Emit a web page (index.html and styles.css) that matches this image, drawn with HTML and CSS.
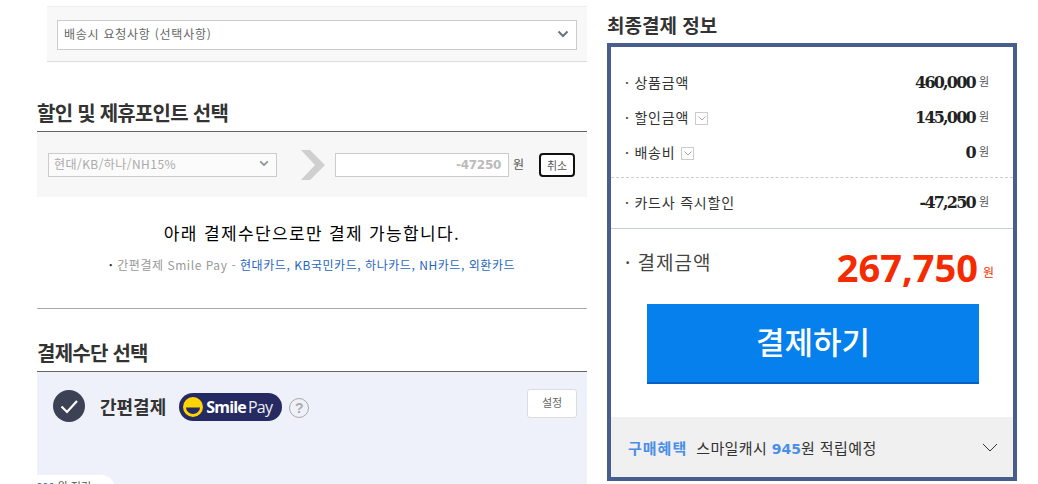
FILE: index.html
```html
<!DOCTYPE html>
<html lang="ko">
<head>
<meta charset="utf-8">
<title>최종결제 정보</title>
<link rel="stylesheet" href="styles.css">
</head>
<body>
<div class="page">
  <main class="left">
    <div class="request">
      <div class="select request-select"><span>배송시 요청사항 (선택사항)</span>
        <svg class="caret" width="12" height="8" viewBox="0 0 12 8"><path d="M1.5 1.5 6 6l4.500-4.500" fill="none" stroke="#6b7280" stroke-width="2"/></svg>
      </div>
    </div>
    <h2 class="section-title discount-title">할인 및 제휴포인트 선택</h2>
    <div class="discount">
      <div class="select discount-select"><span>현대/KB/하나/NH15%</span>
        <svg class="caret" width="10" height="7" viewBox="0 0 12 8"><path d="M1.500 1.500 6 6l4.500-4.500" fill="none" stroke="#8a8f96" stroke-width="2"/></svg>
      </div>
      <svg class="arrow" width="24" height="30" viewBox="0 0 24 30"><path d="M0 0h9l15 15L9 30H0l14-15z" fill="#cfcfcf"/></svg>
      <div class="amount">-47250</div>
      <span class="won-label">원</span>
      <button class="cancel">취소</button>
    </div>
    <p class="notice">아래 결제수단으로만 결제 가능합니다.</p>
    <p class="cards"><b class="dot">·</b> 간편결제 Smile Pay - <span class="blue">현대카드, KB국민카드, 하나카드, NH카드, 외환카드</span></p>
    <hr class="rule">
    <h2 class="section-title method-title">결제수단 선택</h2>
    <div class="method">
      <div class="method-row">
        <svg class="check" width="32" height="32" viewBox="0 0 32 32"><circle cx="16" cy="16" r="16" fill="#3d4155"/><path d="M8.500 16.500l5.500 5.500 10-11" fill="none" stroke="#fff" stroke-width="2.200"/></svg>
        <span class="method-name">간편결제</span>
        <span class="smile">
          <svg width="20" height="20" viewBox="0 0 20 20"><circle cx="10" cy="10" r="10" fill="#ffd400"/><path d="M3 10.500h14a7 6.500 0 0 1-14 0z" fill="#252a63"/></svg>
          <span class="smile-text"><b>Smile</b>Pay</span>
        </span>
        <span class="help">?</span>
        <button class="setting">설정</button>
      </div>
      <div class="pill"><span class="blue">3,000</span> 원 적립</div>
    </div>
  </main>
  <aside class="right">
    <h2 class="summary-title">최종결제 정보</h2>
    <div class="summary">
      <div class="rows">
        <div class="row"><span class="label">· 상품금액</span><span class="value">460,000</span><span class="won">원</span></div>
        <div class="row"><span class="label">· 할인금액<i class="mini"><svg width="8" height="5" viewBox="0 0 8 5"><path d="M.5.500 4 4 7.500.5" fill="none" stroke="#aaa"/></svg></i></span><span class="value">145,000</span><span class="won">원</span></div>
        <div class="row"><span class="label">· 배송비<i class="mini"><svg width="8" height="5" viewBox="0 0 8 5"><path d="M.5.500 4 4 7.500.5" fill="none" stroke="#aaa"/></svg></i></span><span class="value">0</span><span class="won">원</span></div>
      </div>
      <div class="card-row">
        <div class="row"><span class="label">· 카드사 즉시할인</span><span class="value">-47,250</span><span class="won">원</span></div>
      </div>
      <div class="total">
        <span class="total-label">· 결제금액</span>
        <span class="total-value">267,750</span>
        <span class="total-won">원</span>
      </div>
      <button class="pay">결제하기</button>
      <div class="benefit">
        <b class="benefit-head">구매혜택</b>
        <span class="benefit-text">스마일캐시 <em>945</em>원 적립예정</span>
        <svg class="benefit-caret" width="16" height="9" viewBox="0 0 16 9"><path d="M1 1l7 7 7-7" fill="none" stroke="#333"/></svg>
      </div>
    </div>
  </aside>
</div>
</body>
</html>
```
FILE: styles.css
```css
* { box-sizing: border-box; }
html, body { margin: 0; padding: 0; background: #fff; }
body { font-family: "Noto Sans CJK KR", "Noto Sans", sans-serif; color: #333; overflow: hidden; height: 484px; }
.page { display: flex; gap: 20px; padding-left: 37px; height: 484px; overflow: hidden; }
.left { width: 550px; flex: none; }
.right { width: 410px; flex: none; }

.request { margin: 6px 0 0 10px; height: 56px; padding: 13px 10px 0; background: #f8f8f8; border-top: 1px solid #eee; border-bottom: 1px solid #ddd; }
.select { display: flex; align-items: center; justify-content: space-between; background: #fff; border: 1px solid #ccc; }
.request-select { height: 30px; padding: 0 7px 3px 6px; font-size: 12px; letter-spacing: .75px; color: #666; }
.section-title { margin: 0; font-size: 20px; font-weight: 700; color: #333; line-height: 26px; letter-spacing: -.75px; }
.discount-title { margin-top: 38px; height: 31px; }
.discount { display: flex; align-items: center; height: 66px; padding: 0 12px 0 11px; background: #f7f7f7; border-top: 1px solid #666; }
.discount-select { width: 229px; height: 24px; padding: 0 7px 3px 5px; font-size: 12px; letter-spacing: .45px; color: #aaa; background: #fbfbfb; }
.arrow { margin: 0 10px 0 24px; }
.amount { width: 174px; height: 24px; padding-right: 7px; border: 1px solid #ccc; background: #fff; font: 700 12px/22px "DejaVu Sans", sans-serif; color: #bbb; text-align: right; letter-spacing: -.3px; }
.won-label { margin: -3px 0 0 4px; width: 26px; font-size: 12px; color: #555; }
.cancel { width: 36px; height: 24px; padding: 0; border: 2px solid #111; border-radius: 4px; background: #fff; font: 11px "Noto Sans CJK KR", sans-serif; color: #555; }
.notice { margin: 24px 0 0; text-align: center; font-size: 17px; line-height: 24px; color: #000; letter-spacing: 1.35px; }
.cards { margin: 11px 0 0; text-align: center; font-size: 12px; line-height: 18px; color: #999; letter-spacing: .55px; }
.dot { color: #333; }
.blue { color: #1f66c1; }
.rule { margin: 34px 0 0; border: 0; border-top: 1px solid #aaa; }
.method-title { margin-top: 31px; height: 31px; }
.method { position: relative; height: 114px; background: #eef1f9; border-top: 1px solid #666; }
.method-row { display: flex; align-items: center; padding: 18px 10px 0 16px; }
.method-name { margin-left: 15px; font-size: 18px; font-weight: 700; color: #333; letter-spacing: 0; }
.smile { display: flex; align-items: center; gap: 3px; width: 103px; height: 28px; margin-left: 13px; padding-left: 4px; margin-top: 2px; background: #252a63; border-radius: 14px; }
.smile-text { font: 400 16px/28px "Open Sans", sans-serif; color: #eee; letter-spacing: -.8px; white-space: nowrap; }
.smile-text b { font-weight: 700; color: #fff; margin-right: 2px; }
.help { width: 20px; height: 20px; margin: 4px 0 0 7px; border: 1px solid #aaa; border-radius: 50%; text-align: center; font: 700 14px/18px "Liberation Sans", sans-serif; color: #aaa; }
.setting { width: 50px; height: 29px; margin: -5px 0 0 auto; padding: 0 0 4px; background: #fff; border: 1px solid #ddd; border-radius: 3px; font: 11px "Noto Sans CJK KR", sans-serif; color: #666; }
.pill { position: absolute; left: 0; top: 103px; width: 78px; height: 20px; padding-top: 2px; background: #fff; border-radius: 0 14px 0 0; font-size: 11px; line-height: 18px; color: #555; white-space: nowrap; overflow: hidden; text-indent: -10px; }

.summary-title { margin: 13px 0 6px; font-size: 19px; font-weight: 700; line-height: 24px; color: #333; letter-spacing: 0; }
.summary { height: 438px; border: 4px solid #475e8c; }
.rows { height: 131px; padding-top: 17px; border-bottom: 1px dashed #ccc; }
.row { display: flex; align-items: center; height: 35px; padding: 0 24px 0 14px; }
.label { display: flex; align-items: center; flex: 1; font-size: 14px; letter-spacing: .8px; color: #333; }
.mini { display: flex; align-items: center; justify-content: center; width: 13px; height: 13px; margin: 3px 0 0 6px; border: 1px solid #ccc; }
.value { margin-top: 2px; font: 700 16px/20px "DejaVu Serif", serif; color: #222; letter-spacing: -1.8px; }
.won { margin: -1px 0 0 4px; font-size: 11px; color: #555; }
.card-row { height: 51px; padding-top: 6px; border-bottom: 1px solid #c5cfe0; }
.total { display: flex; align-items: center; height: 75px; padding: 0 19px 0 14px; }
.total-label { flex: 1; margin-top: -10px; font-size: 19px; letter-spacing: 1px; color: #444; }
.total-value { font: 700 38px/44px "Open Sans", sans-serif; color: #f52b00; letter-spacing: 0; }
.total-won { margin: 10px 0 0 5px; font-size: 12px; color: #f52b00; }
.pay { display: block; width: 332px; height: 80px; margin: 0 0 33px 36px; padding: 0 0 5px; border: 0; border-bottom: 2px solid #0460c4; background: #0580ec; color: #fff; font: 500 31px "Noto Sans CJK KR", sans-serif; }
.benefit { display: flex; align-items: center; height: 60px; padding: 0 15px 0 17px; background: #f0f0f0; font-size: 15px; }
.benefit-head { color: #4a8ee8; font-weight: 700; letter-spacing: 1px; }
.benefit-text { flex: 1; margin-left: 9px; color: #333; letter-spacing: .4px; }
.benefit-text em { font: 700 14px "DejaVu Sans", sans-serif; font-style: normal; color: #4a8ee8; letter-spacing: 0; }
```
